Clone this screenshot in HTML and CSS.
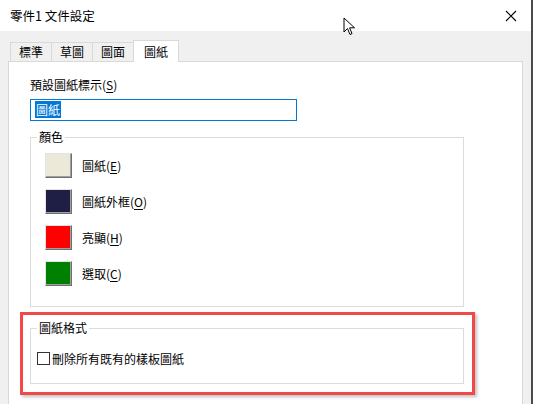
FILE: index.html
```html
<!DOCTYPE html>
<html lang="zh-Hant">
<head>
    <meta charset="UTF-8">
    <title>零件1 文件設定</title>
    <link rel="stylesheet" href="styles.css">
</head>
<body>
    <div class="window">
        <div class="titlebar">
            <span class="title">零件1 文件設定</span>
            <span class="close">
                <svg width="12" height="12" viewBox="0 0 12 12"><path d="M1 1 L11 11 M11 1 L1 11" stroke="#000" stroke-width="1.1" fill="none"/></svg>
            </span>
        </div>

        <div class="content">
            <div class="tabs">
                <div class="tab">標準</div>
                <div class="tab">草圖</div>
                <div class="tab">圖面</div>
                <div class="tab active">圖紙</div>
            </div>

            <div class="panel">
                <div class="field-label">預設圖紙標示(<u>S</u>)</div>
                <div class="text-input"><span class="sel">圖紙</span></div>

                <fieldset class="group colors">
                    <legend>顏色</legend>
                    <div class="group-body">
                        <div class="color-row">
                            <span class="swatch" style="background:#ece9d8"></span>
                            <span>圖紙(<u>E</u>)</span>
                        </div>
                        <div class="color-row">
                            <span class="swatch" style="background:#1f1f45"></span>
                            <span>圖紙外框(<u>O</u>)</span>
                        </div>
                        <div class="color-row">
                            <span class="swatch" style="background:#ff0000"></span>
                            <span>亮顯(<u>H</u>)</span>
                        </div>
                        <div class="color-row">
                            <span class="swatch" style="background:#008000"></span>
                            <span>選取(<u>C</u>)</span>
                        </div>
                    </div>
                </fieldset>

                <div class="highlight">
                    <fieldset class="group format">
                        <legend>圖紙格式</legend>
                        <label class="check">
                            <span class="box"></span>
                            <span>刪除所有既有的樣板圖紙</span>
                        </label>
                    </fieldset>
                </div>
            </div>
        </div>

        <!-- puntero del ratón -->
        <svg class="cursor" width="14" height="20" viewBox="0 0 14 20">
            <path d="M1 1 L1 15 L4.5 11.5 L7 17.5 L9 16.6 L6.6 10.8 L11.5 10.8 Z" fill="#fff" stroke="#000" stroke-width="1" stroke-linejoin="round"/>
        </svg>
    </div>
</body>
</html>
```

FILE: styles.css
```css
* {
    box-sizing: border-box;
}
body {
    margin: 0;
    width: 533px;
    height: 404px;
    overflow: hidden;
    font-family: "Noto Sans CJK TC", "Noto Sans", sans-serif;
    font-size: 12px;
    color: #000;
}
.window {
    position: relative;
    width: 533px;
    height: 404px;
    background-color: #f0f0f0;
    border-right: 2px solid #4b4b4b;
}
.titlebar {
    height: 31px;
    background-color: #fff;
    display: flex;
    align-items: center;
    justify-content: space-between;
    padding: 0 14px 0 10px;
}
.title {
    font-size: 12.5px;
}
.close {
    display: flex;
}
.content {
    padding: 8px 8px 0 8px;
}
.tabs {
    display: flex;
    align-items: flex-end;
    height: 22px;
    padding-left: 2px;
}
.tab {
    height: 19px;
    line-height: 18px;
    padding: 0 8px;
    border: 1px solid #d9d9d9;
    border-bottom: none;
    margin-right: -1px;
    background-color: #f0f0f0;
}
.tab.active {
    height: 22px;
    line-height: 21px;
    padding: 0 10px;
    background-color: #fff;
    position: relative;
    top: 1px;
}
.panel {
    background-color: #fff;
    border: 1px solid #d9d9d9;
    height: 360px;
    padding: 14px 0 0 21px;
}
.field-label {
    line-height: 18px;
}
u {
    text-decoration: underline;
    text-underline-offset: 2px;
}
.text-input {
    margin-top: 5px;
    width: 267px;
    height: 22px;
    border: 1px solid #0078d7;
    padding: 2px 0 0 4px;
    line-height: 16px;
}
.sel {
    background-color: #0078d7;
    color: #fff;
    padding: 0 1px;
}
.group {
    margin: 0;
    border: 1px solid #dcdcdc;
    width: 434px;
    padding: 0;
}
.group legend {
    padding: 0 2px;
    margin-left: 6px;
    line-height: 16px;
}
.colors {
    margin-top: 8px;
    height: 178px;
}
.group-body {
    padding: 8px 0 0 14px;
}
.color-row {
    display: flex;
    align-items: center;
    gap: 10px;
    height: 25px;
    margin-bottom: 11px;
}
.swatch {
    width: 27px;
    height: 25px;
    border: 1px solid;
    border-color: #e3e3e3 #6f6f6f #6f6f6f #e3e3e3;
    box-shadow: inset -1px -1px 0 #a0a0a0;
}
.highlight {
    margin: 5px 0 0 -10px;
    width: 455px;
    padding: 5px 8px 8px 7px;
    border: 3px solid #f24848;
    box-shadow: 2px 2px 3px rgba(0,0,0,0.25);
}
.format {
    height: 64px;
}
.check {
    display: flex;
    align-items: center;
    gap: 2px;
    margin: 14px 0 0 6px;
}
.box {
    width: 13px;
    height: 13px;
    border: 1px solid #333;
    background-color: #fff;
}
.cursor {
    position: absolute;
    left: 343px;
    top: 17px;
}
```
